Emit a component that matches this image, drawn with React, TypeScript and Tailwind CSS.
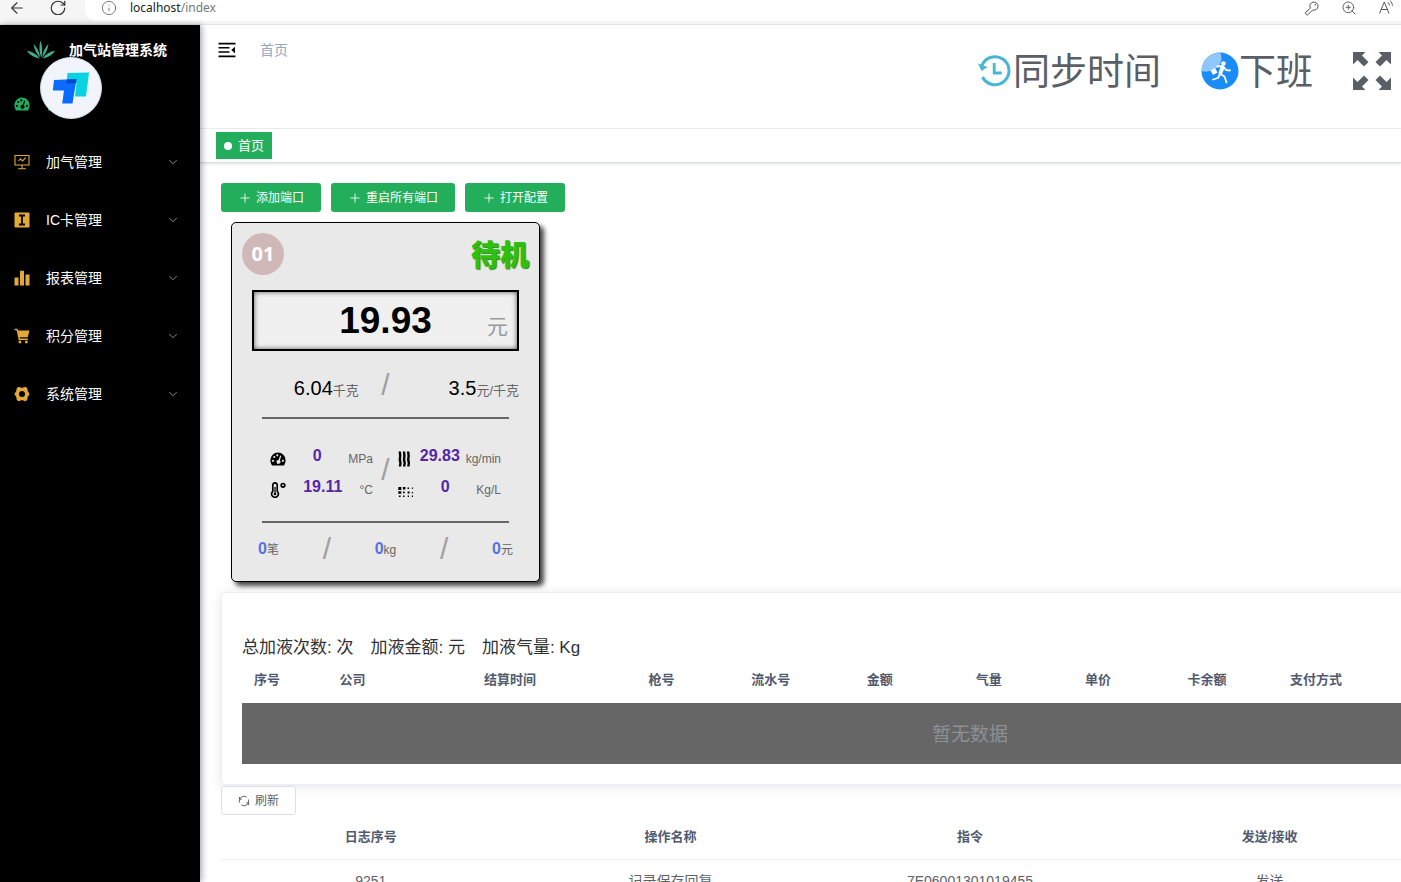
import React from "react";
import { ChevronDown, Info, Plus, ZoomIn, ArrowLeft, RotateCw } from "lucide-react";

type IconProps = { className?: string };

const Gauge = ({ className }: IconProps) => (
  <svg viewBox="0 0 16 14" className={className} fill="currentColor" aria-hidden="true">
    <path
      fillRule="evenodd"
      d="M8 0.5A7.6 7.6 0 0 0 .4 8.1c0 1.8.5 3.400 1.300 4.800.2.400.6.600 1 .6h10.600c.4 0 .8-.2 1-.6.8-1.400 1.300-3 1.300-4.800A7.600 7.600 0 0 0 8 .5zM3 7.700a1.100 1.100 0 1 0 0 2.200 1.100 1.100 0 0 0 0-2.200zM4.300 3.900a1.100 1.100 0 1 0 0 2.200 1.100 1.100 0 0 0 0-2.200zM7.300 2.200a1.100 1.100 0 1 0 0 2.200 1.100 1.100 0 0 0 0-2.200zM10.200 3.500 8.500 8a1.900 1.900 0 1 0 1.300.500l1.500-4.500zM12.900 7.700a1.100 1.100 0 1 0 0 2.200 1.100 1.100 0 0 0 0-2.200z"
    />
  </svg>
);

const Monitor = ({ className }: IconProps) => (
  <svg viewBox="0 0 16 16" className={className} fill="none" stroke="currentColor" strokeWidth="1.1" aria-hidden="true">
    <path d="M1 1.500h14v9.500H1zM8 11v3.500M4 14.700h8M4.500 7l2-2.200 2 2.200 3.200-3.400" />
  </svg>
);

const CardIcon = ({ className }: IconProps) => (
  <svg viewBox="0 0 16 16" className={className} aria-hidden="true">
    <rect x="0.500" y="0.500" width="15" height="15" rx="1" fill="currentColor" />
    <path d="M5 3.500h6M5 12.500h6M8 3.500v9" stroke="#000" strokeWidth="1.800" />
  </svg>
);

const Bars = ({ className }: IconProps) => (
  <svg viewBox="0 0 16 16" className={className} fill="currentColor" aria-hidden="true">
    <path d="M.5 7.500h4v8h-4zM6 .8h4v14.700H6zM11.500 4.500h4v11h-4z" />
  </svg>
);

const Cart = ({ className }: IconProps) => (
  <svg viewBox="0 0 16 16" className={className} fill="currentColor" aria-hidden="true">
    <path d="M.5.8h3l.6 1.800h11.400l-1.800 6.600H5.600l.3 1.300h7.900v1.400H4.700L2.600 2.200H.5z" />
    <circle cx="5.900" cy="14" r="1.400" />
    <circle cx="12.300" cy="14" r="1.400" />
  </svg>
);

const Gear = ({ className }: IconProps) => (
  <svg viewBox="0 0 16 16" className={className} fill="currentColor" aria-hidden="true">
    <path
      fillRule="evenodd"
      d="M4.800.8 8 2l3.200-1.200 2 1.300.6 3.200 1.900 2.700-1.900 2.700-.6 3.200-2 1.300L8 14l-3.200 1.200-2-1.300-.6-3.200L.3 8l1.900-2.700.6-3.200zM8 5a3 3 0 1 0 0 6 3 3 0 0 0 0-6z"
    />
  </svg>
);

const Agave = ({ className }: IconProps) => (
  <svg viewBox="0 0 30 20" className={className} fill="#3fae8c" aria-hidden="true">
    <path d="M14.500.5c1.900 5 2.200 11 .8 17.500-2.200-6-2.500-12-.8-17.500zM7.500 4c3.600 3.500 5.900 8 6.700 13.500C11 14.500 8.500 10 7.500 4zM22.500 4c-3.600 3.500-5.600 8-6.400 13.500 3.200-3 5.400-7.500 6.400-13.500zM.8 10.800c5 .7 9.900 3.200 13 7.700C8.300 17.800 4 15.300.8 10.800zM29.200 10.800c-5 .7-9.600 3.200-12.700 7.700 5.500-.7 9.500-3.200 12.700-7.700z" />
  </svg>
);

const FoldIcon = ({ className }: IconProps) => (
  <svg viewBox="0 0 18 16" className={className} fill="currentColor" aria-hidden="true">
    <path d="M.5.800h17v1.700H.5zM.5 5h11v1.600H.5zM.5 9.200h11v1.600H.5zM.5 13.500h17v1.700H.5zM17 4.800v6.400L13.300 8z" />
  </svg>
);

const HistoryIcon = ({ className }: IconProps) => (
  <svg viewBox="0 0 34 34" className={className} fill="none" stroke="#45b6d4" strokeWidth="3" aria-hidden="true">
    <path d="M4 11.500A14 14 0 1 1 4.500 23" />
    <path d="M16.200 9v10h7.500" strokeWidth="2.800" />
    <path d="M0 9.500 9.500 13l-6 4z" fill="#45b6d4" stroke="none" />
  </svg>
);

const RunnerIcon = ({ className }: IconProps) => (
  <svg viewBox="0 0 38 38" className={className} aria-hidden="true">
    <circle cx="19" cy="19" r="18.500" fill="#1a8cf7" />
    <path d="M.5 19A18.500 18.500 0 0 1 19 .5c2 3 2 9-1 13S7 21 .5 19z" fill="#8fc6fb" />
    <circle cx="22.500" cy="11.500" r="2.300" fill="#fff" />
    <path d="m16 14.500 6-.5 3 4 4 .5M21 15l-2.500 6.500 5 3 2 6M19 22l-2 4-5 1.500" fill="none" stroke="#fff" strokeWidth="1.800" strokeLinecap="round" strokeLinejoin="round" />
    <path d="m20 14 3.500 2-2.500 6-3.500-1z" fill="#fff" />
    <path d="m9.500 18.500 4.500-2.500 2.500 4.500-4.500 2.500z" fill="#fff" />
  </svg>
);

const ExpandIcon = ({ className }: IconProps) => (
  <svg viewBox="0 0 38 38" className={className} fill="#5a5e66" aria-hidden="true">
    <path d="M0 0h12.500L9 3.500l6.500 6.500-4.500 4.500L4.500 8 0 12.500zM38 0v12.500L33.500 8 27 14.500 22.500 10 29 3.500 25.500 0zM0 38V25.500L4.500 30l6.500-6.500 4.500 4.500L9 34.500l3.500 3.500zM38 38H25.500l3.500-3.500-6.500-6.500 4.500-4.500 6.500 6.500 4.500-4.500z" />
  </svg>
);

const Thermometer = ({ className }: IconProps) => (
  <svg viewBox="0 0 16 16" className={className} fill="none" stroke="currentColor" aria-hidden="true">
    <path d="M2.800 9.300V3a2.200 2.200 0 0 1 4.400 0v6.300a3.400 3.400 0 1 1-4.400 0z" strokeWidth="1.700" />
    <path d="M5 5v6" strokeWidth="1.200" />
    <circle cx="5" cy="12" r="1.300" fill="currentColor" stroke="none" />
    <circle cx="13" cy="3.300" r="1.800" strokeWidth="1.700" />
  </svg>
);

const Waves = ({ className }: IconProps) => (
  <svg viewBox="0 0 16 16" className={className} fill="none" stroke="currentColor" strokeWidth="2.400" aria-hidden="true">
    <path d="M2 .5c-.6 2 .6 3.200.2 5s-.8 3 0 5-.2 3.400-.2 5M6.200.5c-.6 2 .6 3.200.2 5s-.8 3 0 5-.2 3.400-.2 5M10.400.5c-.6 2 .6 3.200.2 5s-.8 3 0 5-.2 3.400-.2 5" />
  </svg>
);

const Dots = ({ className }: IconProps) => (
  <svg viewBox="0 0 16 16" className={className} fill="currentColor" aria-hidden="true">
    <path d="M.3 5h3v3h-3zM4.900 5h2.500v2.500H4.900zM9.500 5.500h1.600v1.600H9.500zM13.800 5.500h1.300v1.300h-1.300zM.3 9.200h3v2.600h-3zM5 9.600h1.700v1.700H5zM9.600 9.600h2v2h-2zM13.800 9.900h1.300v1.300h-1.300zM.9 13.500h1.700v1.500H.9zM5 13.500h1.500V15H5zM9.700 13.500h1.300V15H9.700zM13.800 13.500H15V15h-1.200z" />
  </svg>
);

const RefreshIcon = ({ className }: IconProps) => (
  <svg viewBox="0 0 12 12" className={className} fill="none" stroke="currentColor" strokeWidth="1" aria-hidden="true">
    <path d="M1.500 7.500A4.700 4.700 0 0 1 8.500 2M10.500 4.500A4.700 4.700 0 0 1 3.500 10M1.500 2v2.200h2.200M10.500 10V7.800H8.300" />
  </svg>
);

const KeyIcon = ({ className }: IconProps) => (
  <svg viewBox="0 0 16 16" className={className} fill="none" stroke="currentColor" strokeWidth="1" aria-hidden="true">
    <path d="M6.400 8.200A4.100 4.100 0 1 1 8.600 10L4.500 14.200a1.700 1.700 0 0 1-2.700-2.100z" />
    <circle cx="11.300" cy="4.700" r=".8" fill="currentColor" stroke="none" />
  </svg>
);

const ReadAloud = ({ className }: IconProps) => (
  <svg viewBox="0 0 16 16" className={className} fill="none" stroke="currentColor" strokeWidth="1" aria-hidden="true">
    <path d="m1.500 13.500 4.800-11.500L11 13.500M3.300 9.500h6M9.800 2.200c1 .8 1.500 1.900 1.500 3.200M11.800.8c1.700 1.200 2.600 2.900 2.600 5" />
  </svg>
);

const menu = [
  { label: "加气管理", Icon: Monitor },
  { label: "IC卡管理", Icon: CardIcon },
  { label: "报表管理", Icon: Bars },
  { label: "积分管理", Icon: Cart },
  { label: "系统管理", Icon: Gear },
];

const Slash = () => <span className="text-center text-[30px] leading-8 font-light text-[#a0a0a0]">/</span>;

function BrowserBar() {
  return (
    <div className="flex h-[25px] shrink-0 border-b border-[#e4e4e4] bg-[#f5f5f5] text-[#333]">
      <div className="flex h-[15px] w-[85px] shrink-0 items-center gap-[23px] overflow-hidden pl-2">
        <button aria-label="后退"><ArrowLeft className="size-[18px]" strokeWidth={1.5} /></button>
        <button aria-label="刷新页面"><RotateCw className="size-[18px]" strokeWidth={1.6} /></button>
      </div>
      <div className="h-[21px] flex-1 overflow-hidden rounded-bl-xl bg-white">
        <div className="flex h-4 items-center pr-[7px] pl-4 text-[#666]">
          <Info className="size-4" strokeWidth={1.3} />
          <span className="ml-[13px] font-['Noto_Sans'] text-xs leading-4 text-[#777]">
            <span className="text-[#222]">localhost</span>/index
          </span>
          <span className="ml-auto flex items-center gap-[21px] text-[#555]">
            <KeyIcon className="size-4" />
            <ZoomIn className="size-4" strokeWidth={1.4} />
            <ReadAloud className="size-4" />
          </span>
        </div>
      </div>
    </div>
  );
}

function Sidebar() {
  return (
    <aside className="relative z-10 w-[200px] shrink-0 bg-black text-white shadow-[2px_0_6px_rgba(0,21,41,0.35)]">
      <div className="flex h-[50px] items-center pl-[26px]">
        <Agave className="h-5 w-[30px]" />
        <h1 className="ml-[13px] text-sm font-bold">加气站管理系统</h1>
      </div>
      <nav className="text-sm">
        <a href="#home" className="flex h-[58px] items-center pl-[14px] text-[#1fae5c]">
          <Gauge className="h-[14px] w-4" />
          <span className="ml-4">首页</span>
        </a>
        {menu.map(({ label, Icon }) => (
          <button key={label} className="flex h-[58px] w-full items-center pr-5 pl-[14px]">
            <Icon className="size-4 text-[#e3a938]" />
            <span className="ml-4">{label}</span>
            <ChevronDown className="ml-auto size-[14px] text-[#999]" strokeWidth={1.5} />
          </button>
        ))}
      </nav>
      <div className="absolute top-8 left-10 flex size-[62px] items-center justify-center rounded-full border border-[#d5dae2] bg-[#f1f5fb]">
        <svg viewBox="0 0 38 32" className="h-8 w-[38px]" aria-hidden="true">
          <path d="M15.500 1 37 .5 34 24.500H23L24.500 11 14.500 11z" fill="#08d3e0" />
          <path d="M2 8 24.500 7 20.500 31.500H10.200L12 18.500H.8z" fill="#0a6cff" />
          <path d="M15.200 7.400 24.500 7l-.7 4.200-9.300.2z" fill="#0848c8" />
        </svg>
      </div>
    </aside>
  );
}

function Navbar() {
  return (
    <header className="flex h-[104px] shrink-0 justify-between border-b border-[#eef0f2] pr-[10px] pl-[18px]">
      <div className="flex h-[50px] items-center gap-6 text-sm text-[#97a8be]">
        <button aria-label="折叠菜单" className="text-black"><FoldIcon className="h-4 w-[18px]" /></button>
        <a href="#home">首页</a>
      </div>
      <div className="flex h-[92px] items-center gap-10 text-[37px] leading-10 text-[#5a5e66]">
        <button className="flex items-center gap-px"><HistoryIcon className="size-[34px]" /><span className="pt-1">同步时间</span></button>
        <button className="flex items-center"><RunnerIcon className="size-[38px]" /><span className="pt-1">下班</span></button>
        <button aria-label="全屏"><ExpandIcon className="size-[38px]" /></button>
      </div>
    </header>
  );
}

function Reading({ Icon, value, unit }: { Icon: React.FC<IconProps>; value: string; unit: string }) {
  return (
    <div className="flex h-6 items-end justify-between">
      <Icon className="size-4 text-black" />
      <b className="leading-[22px] text-[#5626a5]">{value}</b>
      <span className="text-xs leading-4 text-[#666]">{unit}</span>
    </div>
  );
}

function Total({ value, unit }: { value: string; unit: string }) {
  return (
    <span className="text-xs text-[#666]"><b className="text-base text-[#5672e2]">{value}</b>{unit}</span>
  );
}

function PumpCard() {
  return (
    <section className="mt-[10px] ml-[10px] w-[309px] rounded-[5px] border border-black bg-[#e9e9e9] pb-[6px] shadow-[4px_4px_5px_#444]">
      <div className="flex items-center justify-between px-[10px] pt-[10px]">
        <span className="flex size-[42px] items-center justify-center rounded-full bg-[#d1b8b8] font-['Noto_Sans'] text-xl font-bold text-white">01</span>
        <strong className="pt-1 text-[29px] leading-[38px] font-black text-[#2dc010] [text-shadow:1px_1px_1px_#2a8a20]">待机</strong>
      </div>
      <div className="mx-5 mt-[15px] grid h-[61px] grid-cols-[1fr_auto_1fr] items-center border-2 border-black bg-[#f0f0f0] px-[9px] shadow-[inset_0_0_5px_#555]">
        <span className="col-start-2 text-[37px] font-bold text-black">19.93</span>
        <span className="pt-3 text-right text-[21px] leading-6 text-[#999]">元</span>
      </div>
      <div className="mx-5 grid h-[66px] grid-cols-[2fr_1fr_2fr] items-baseline pt-[18px] text-right text-[13px] text-[#666]">
        <span><span className="text-xl text-black">6.04</span>千克</span>
        <Slash />
        <span className="whitespace-nowrap"><span className="text-xl text-black">3.5</span>元/千克</span>
      </div>
      <hr className="mx-[30px] border-t-2 border-[#666]" />
      <div className="flex h-[102px] items-center justify-between px-[38px]">
        <div className="grid w-[103px] gap-[7px]">
          <Reading Icon={Gauge} value="0" unit="MPa" />
          <Reading Icon={Thermometer} value="19.11" unit="°C" />
        </div>
        <Slash />
        <div className="grid w-[103px] gap-[7px]">
          <Reading Icon={Waves} value="29.83" unit="kg/min" />
          <Reading Icon={Dots} value="0" unit="Kg/L" />
        </div>
      </div>
      <hr className="mx-[30px] border-t-2 border-[#666]" />
      <div className="flex h-[52px] items-center justify-between px-[26px]">
        <Total value="0" unit="笔" />
        <Slash />
        <Total value="0" unit="kg" />
        <Slash />
        <Total value="0" unit="元" />
      </div>
    </section>
  );
}

const actions = ["添加端口", "重启所有端口", "打开配置"];
const columns = ["序号", "公司", "结算时间", "枪号", "流水号", "金额", "气量", "单价", "卡余额", "支付方式", "", "", ""];
const logColumns = ["日志序号", "操作名称", "指令", "发送/接收", ""];
const logRow = ["9251", "记录保存回复", "7E06001301019455", "发送", ""];

export default function App() {
  return (
    <div className="flex h-screen flex-col overflow-hidden bg-white font-['Liberation_Sans','Noto_Sans_CJK_SC',sans-serif] text-[#303133]">
      <BrowserBar />
      <div className="flex min-h-0 flex-1">
        <Sidebar />
        <main className="min-w-0 flex-1">
          <Navbar />
          <div className="flex h-[34px] items-center border-b border-[#d8dce5] pl-4 shadow-[0_1px_3px_rgba(0,0,0,0.12)]">
            <a href="#home" className="flex h-[27px] items-center gap-[6px] bg-[#22ae5a] px-2 text-[13px] text-white">
              <span className="size-2 rounded-full bg-white" />首页
            </a>
          </div>
          <div className="overflow-hidden pt-5 pl-[21px]">
            <div className="flex gap-[10px]">
              {actions.map((label) => (
                <button key={label} className="flex h-[29px] items-center gap-1 rounded-[3px] bg-[#22ae5a] px-[17px] text-xs text-white">
                  <Plus className="size-[14px]" strokeWidth={1.5} />{label}
                </button>
              ))}
            </div>
            <PumpCard />
            <div className="mt-[10px] min-w-[1498px]">
              <section className="rounded border border-[#ebeef5] bg-white p-5 shadow-[0_2px_12px_rgba(0,0,0,0.1)]">
                <div className="mt-[26px] flex gap-[17px] text-[17px] leading-[18px]">
                  <span>总加液次数: 次</span>
                  <span>加液金额: 元</span>
                  <span>加液气量: Kg</span>
                </div>
                <table className="w-full table-fixed text-center">
                  <colgroup>
                    <col className="w-[50px]" />
                    <col className="w-[121px]" />
                    <col className="w-[194px]" />
                  </colgroup>
                  <thead>
                    <tr className="h-[46px] text-[13px] text-[#515a6e]">
                      {columns.map((label, i) => <th key={i}>{label}</th>)}
                    </tr>
                  </thead>
                  <tbody>
                    <tr className="h-[61px] bg-[#666] text-[19px] text-[#8d9095]">
                      <td colSpan={13} className="pt-1">暂无数据</td>
                    </tr>
                  </tbody>
                </table>
              </section>
              <button className="relative mt-px flex h-[29px] items-center gap-[5px] rounded-[3px] border border-[#dcdfe6] bg-white px-4 text-xs text-[#606266]">
                <RefreshIcon className="size-3" />刷新
              </button>
              <table className="w-full table-fixed text-center">
                <thead>
                  <tr className="h-11 border-b border-[#ebeef5] text-[13px] text-[#515a6e]">
                    {logColumns.map((label, i) => <th key={i}>{label}</th>)}
                  </tr>
                </thead>
                <tbody>
                  <tr className="h-11 text-sm text-[#606266]">
                    {logRow.map((text, i) => <td key={i}>{text}</td>)}
                  </tr>
                </tbody>
              </table>
            </div>
          </div>
        </main>
      </div>
    </div>
  );
}
